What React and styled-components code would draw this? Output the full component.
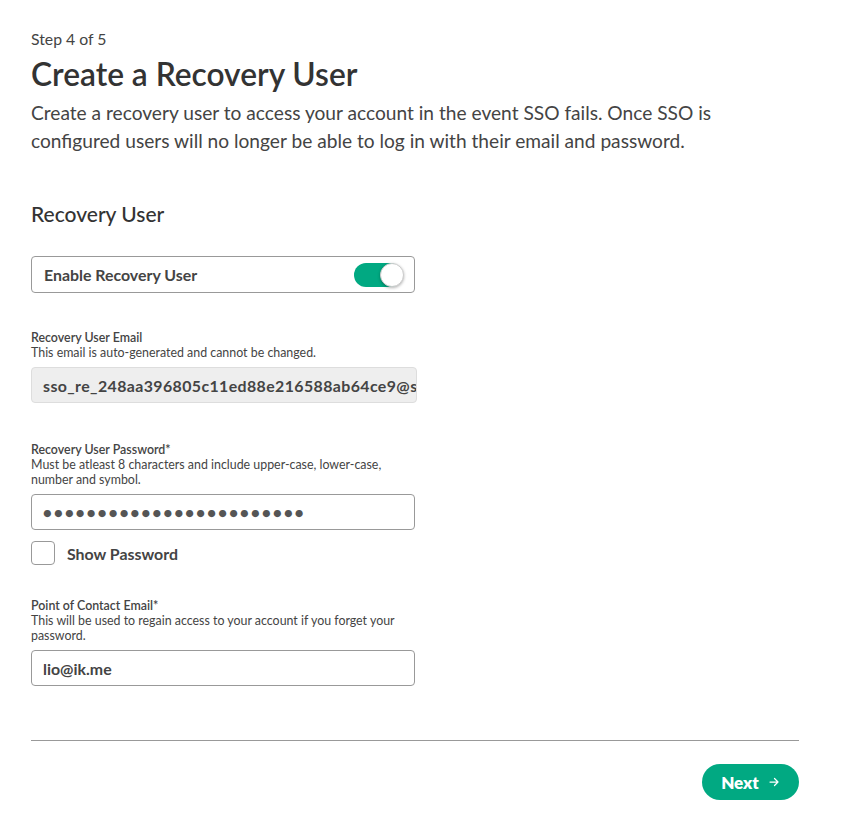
import React from "react";
import styled, { createGlobalStyle } from "styled-components";

const Global = createGlobalStyle`
  html, body { margin: 0; padding: 0; background: #fff; }
  body { font-family: Lato, "Noto Sans", sans-serif; color: #444; }
  * { box-sizing: border-box; }
`;

const Page = styled.div`
  width: 867px;
  padding: 29px 68px 40px 31px;
`;

const Step = styled.div`
  font-size: 15.8px;
  line-height: 20px;
  color: #444;
`;

const Title = styled.h1`
  margin: 6px 0 6px;
  font-size: 31.7px;
  line-height: 38px;
  font-weight: 600;
  color: #333;
`;

const Desc = styled.p`
  margin: 0;
  font-size: 19.15px;
  line-height: 28px;
  color: #444;
  max-width: 700px;
`;

const SectionTitle = styled.h2`
  margin: 45px 0 0;
  font-size: 21px;
  line-height: 28px;
  font-weight: 500;
  color: #333;
`;

const Form = styled.div`
  width: 384px;
  display: flex;
  flex-direction: column;
`;

const ToggleBox = styled.div`
  margin-top: 28px;
  height: 37px;
  border: 1px solid #999;
  border-radius: 4px;
  display: flex;
  align-items: center;
  justify-content: space-between;
  padding: 0 12px 0 12px;
`;

const BoldLabel = styled.span`
  font-size: 15.9px;
  font-weight: 700;
  color: #444;
`;

const Track = styled.div`
  position: relative;
  width: 48px;
  height: 24px;
  border-radius: 12px;
  background: #01a982;
`;

const Knob = styled.div`
  position: absolute;
  top: 0;
  right: -2px;
  width: 24px;
  height: 24px;
  border-radius: 50%;
  background: #fff;
  border: 1px solid #ccc;
  box-shadow: 0 1px 3px rgba(0, 0, 0, 0.3);
`;

const Field = styled.div`
  margin-top: ${(p) => p.$mt}px;
  display: flex;
  flex-direction: column;
`;

const FieldLabel = styled.div`
  font-size: 12.4px;
  line-height: 15px;
  font-weight: 600;
  color: #444;
`;

const Help = styled.div`
  font-size: 12.4px;
  line-height: 15px;
  color: #444;
`;

const Input = styled.div`
  margin-top: 7px;
  height: 36px;
  border: 1px solid ${(p) => (p.$disabled ? "#ddd" : "#999")};
  background: ${(p) => (p.$disabled ? "#eee" : "#fff")};
  border-radius: 4px;
  display: flex;
  align-items: center;
  padding: 0 11px;
  font-size: 15.9px;
  font-weight: 700;
  color: #444;
  white-space: nowrap;
  overflow: hidden;
  width: ${(p) => (p.$wide ? "386px" : "384px")};
  letter-spacing: ${(p) => (p.$disabled ? "0.4px" : "0")};
`;

const Dots = styled.span`
  font-size: 14.5px;
  letter-spacing: 2.25px;
  color: #555;
`;

const CheckRow = styled.label`
  margin-top: 11px;
  display: flex;
  align-items: center;
  gap: 12px;
`;

const Box = styled.span`
  width: 24px;
  height: 24px;
  border: 1px solid #999;
  border-radius: 4px;
`;

const Divider = styled.hr`
  margin: 54px 0 0;
  border: 0;
  border-top: 1px solid #999;
  width: 768px;
`;

const Footer = styled.div`
  width: 768px;
  display: flex;
  justify-content: flex-end;
  margin-top: 23px;
`;

const NextBtn = styled.button`
  height: 36px;
  width: 97px;
  border: 0;
  border-radius: 18px;
  background: #01a982;
  color: #fff;
  font-family: inherit;
  font-size: 17px;
  font-weight: 800;
  display: flex;
  align-items: center;
  justify-content: center;
  gap: 9px;
  padding: 0;
`;

export default function App() {
  return (
    <>
      <Global />
      <Page>
        <Step>Step 4 of 5</Step>
        <Title>Create a Recovery User</Title>
        <Desc>
          Create a recovery user to access your account in the event SSO fails. Once SSO is
          configured users will no longer be able to log in with their email and password.
        </Desc>
        <SectionTitle>Recovery User</SectionTitle>
        <Form>
          <ToggleBox>
            <BoldLabel>Enable Recovery User</BoldLabel>
            <Track>
              <Knob />
            </Track>
          </ToggleBox>

          <Field $mt={37}>
            <FieldLabel>Recovery User Email</FieldLabel>
            <Help>This email is auto-generated and cannot be changed.</Help>
            <Input $disabled $wide>sso_re_248aa396805c11ed88e216588ab64ce9@s</Input>
          </Field>

          <Field $mt={39}>
            <FieldLabel>Recovery User Password*</FieldLabel>
            <Help>
              Must be atleast 8 characters and include upper-case, lower-case,
              <br />
              number and symbol.
            </Help>
            <Input>
              <Dots>{"●".repeat(24)}</Dots>
            </Input>
          </Field>

          <CheckRow>
            <Box />
            <BoldLabel>Show Password</BoldLabel>
          </CheckRow>

          <Field $mt={33}>
            <FieldLabel>Point of Contact Email*</FieldLabel>
            <Help>
              This will be used to regain access to your account if you forget your
              <br />
              password.
            </Help>
            <Input>lio@ik.me</Input>
          </Field>
        </Form>
        <Divider />
        <Footer>
          <NextBtn>
            Next
            <svg width="12" height="12" viewBox="0 0 24 24" fill="none" stroke="#fff" strokeWidth="2.5" strokeLinecap="round" strokeLinejoin="round">
              <path d="M4 12h16M13 5l7 7-7 7" />
            </svg>
          </NextBtn>
        </Footer>
      </Page>
    </>
  );
}
